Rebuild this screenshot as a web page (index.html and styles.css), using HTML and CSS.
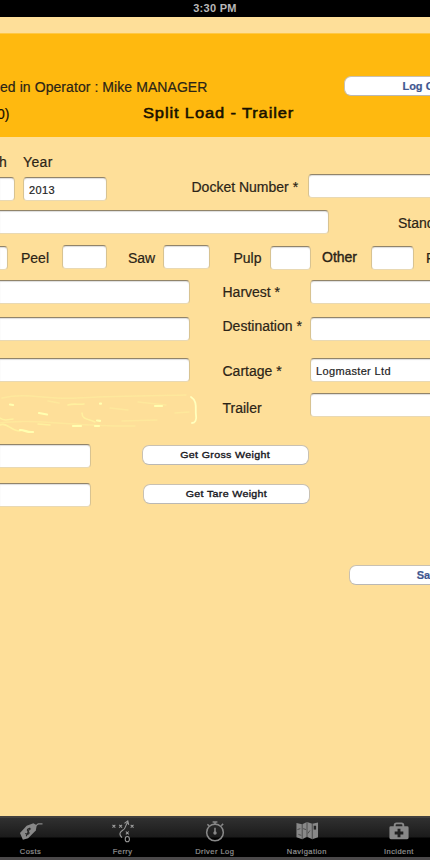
FILE: index.html
```html
<!DOCTYPE html>
<html lang="en">
<head>
<meta charset="utf-8">
<title>Split Load - Trailer</title>
<link rel="stylesheet" href="styles.css">
</head>
<body>
<div class="app">
  <div class="status">3:30 PM</div>
  <header class="header">
    <div class="operator-row">
      <span class="text operator">ed in Operator : Mike MANAGER</span>
      <button class="button logout"><span class="text">Log Out</span></button>
    </div>
    <div class="title-row">
      <span class="text count">0)</span>
      <h1 class="text title">Split Load - Trailer</h1>
    </div>
  </header>
  <main class="form">
    <div class="row date-row">
      <div class="date month"><label class="text">h</label><div class="field"></div></div>
      <div class="date year"><label class="text">Year</label><div class="field"><span class="text value">2013</span></div></div>
      <label class="text docket-label">Docket Number *</label>
      <div class="field docket"></div>
    </div>
    <div class="row stand-row">
      <div class="field open-left forest"></div>
      <label class="text stand-label">Stand *</label>
    </div>
    <div class="row grades">
      <div class="field open-left grade-first low"></div>
      <label class="text peel-label">Peel</label><div class="field peel"></div>
      <label class="text saw-label">Saw</label><div class="field saw"></div>
      <label class="text pulp-label">Pulp</label><div class="field pulp low"></div>
      <label class="text other-label">Other</label><div class="field other low"></div>
      <label class="text last-label">P</label>
    </div>
    <div class="row details">
      <div class="details-left">
        <div class="field open-left"></div>
        <div class="field open-left"></div>
        <div class="field open-left"></div>
        <svg class="residue" width="200" height="42" viewBox="0 0 200 42" fill="none" stroke="#fff3a0" stroke-linecap="round">
          <path stroke-width="1.500" opacity=".45" d="M2 7c25-6 45 2 75 0s65-2 109-3M0 32c30-5 80 4 135 3M48 10l11 2M138 11l28 3M175 22l14-1M110 17l18 2M122 30l35-1"/>
          <path stroke-width="1.600" opacity=".85" d="M68 14c6-2 10 0 16-1M82 22c0 7 7 6 13 9M0 27c5 4 9 1 13 1M38 33l12 1M0 34c8-3 10 6 20 6"/>
          <path stroke="#ffffb0" stroke-width="2.200" d="M10 13.500l3 .5M39 22l8 1.500M97 29.500l3 .3M100 12.700h1M155 15h7M73 35h8M95 35h4M20 39c5 0 8 3 13 2"/>
          <path stroke="#ffffbd" stroke-width="1.800" d="M191 6c7 4 4 13 5 18s-1 8-4 8"/>
        </svg>
      </div>
      <div class="details-labels">
        <label class="text">Harvest *</label>
        <label class="text">Destination *</label>
        <label class="text">Cartage *</label>
        <label class="text">Trailer</label>
      </div>
      <div class="details-right">
        <div class="field"></div>
        <div class="field"></div>
        <div class="field"><span class="text value">Logmaster Ltd</span></div>
        <div class="field"></div>
      </div>
    </div>
    <div class="row weight">
      <div class="field open-left"></div>
      <button class="button gross"><span class="text wide">Get Gross Weight</span></button>
    </div>
    <div class="row weight">
      <div class="field open-left"></div>
      <button class="button tare"><span class="text wide">Get Tare Weight</span></button>
    </div>
    <button class="button save"><span class="text">Save</span></button>
  </main>
  <nav class="tabs">
    <div class="tab">
      <svg width="28" height="24" viewBox="0 0 28 24"><path fill="#888" d="M2.500 13.500 9.500 6l7-2.500 3.500 2-1 5.500-8 8-5.500 1.500z"/><path fill="none" stroke="#888" stroke-width="1.200" d="M17 6c3 1 3-2 5-2h4"/><path fill="none" stroke="#252525" stroke-width="1.100" d="M14 9.500c-3-1.500-5 1-3 2.500s1 4-3 2M13 8l-4 9"/></svg>
      <span class="text">Costs</span>
    </div>
    <div class="tab">
      <svg width="28" height="24" viewBox="0 0 28 24" fill="none" stroke="#999" stroke-width="1.100"><path d="m3 5 3 3m0-3L3 8m7-3 3 3m0-3-3 3m12-3 3 3m0-3-3 3m-5 4 3 3m0-3-3 3M13 18.500c-4-4-2-6 1-8 3-1 2-5 5-8M15.500 3.500 19 1l1 4"/><ellipse cx="18.500" cy="20" rx="2.200" ry="2.700"/></svg>
      <span class="text">Ferry</span>
    </div>
    <div class="tab">
      <svg width="28" height="24" viewBox="0 0 28 24" fill="none" stroke="#888" stroke-width="1.600"><circle cx="14" cy="13" r="8.700"/><path d="M14 5V2m-2.500 0h5M14 8v6m6.500-8 2-2M6 4.500l2 1.500"/><circle cx="14" cy="13.500" r="1" fill="#888"/></svg>
      <span class="text">Driver Log</span>
    </div>
    <div class="tab">
      <svg width="28" height="24" viewBox="0 0 28 24"><path fill="#888" d="m3 3 6 1.500 5-2.500 5.500 2 6-1.500V18l-6 2-5.500-2.500-5 2.500-6-2z"/><path fill="none" stroke="#444" stroke-width=".9" d="M9 4v16m5-18v16m5.500-14v16M4 10l3-1m-2 6 3 1m2-7 3 1m2 4 2-3"/><path fill="#252525" d="M21 6h2.500v4H21z"/></svg>
      <span class="text">Navigation</span>
    </div>
    <div class="tab">
      <svg width="28" height="24" viewBox="0 0 28 24"><path fill="none" stroke="#888" stroke-width="2" d="M9.500 8V5.500q0-2 2-2h5q2 0 2 2V8"/><rect x="4" y="6.500" width="20" height="13.500" rx="1.500" fill="#888"/><path fill="#202020" d="M12.500 9h3v3h3v3h-3v3h-3v-3h-3v-3h3z"/></svg>
      <span class="text">Incident</span>
    </div>
  </nav>
</div>
</body>
</html>
```
FILE: styles.css
```css
* { box-sizing: border-box; }
body { margin: 0; font-family: "Liberation Sans", Arial, sans-serif; }
.app {
  width: 430px; height: 860px; overflow: hidden;
  display: flex; flex-direction: column;
  background: #fedf99; color: #2b2417;
}
.text { white-space: nowrap; font-size: 14px; line-height: 16px; flex: none; -webkit-text-stroke: .2px currentColor; }
.status {
  height: 16.500px; flex: none; background: #000; color: #b8b8b8;
  font-size: 11px; font-weight: bold; line-height: 16px; text-align: center; letter-spacing: .3px;
}
.header { height: 104px; flex: none; margin-top: 16px; padding-top: 42px; background: #ffb90f; border-top: 1px solid #ffc845; }
.operator-row, .title-row { display: flex; align-items: flex-start; }
.operator { width: 344px; margin-top: 3px; letter-spacing: .07px; }
.title-row { margin-top: 10px; color: #171000; }
.count { width: 146px; margin-left: -3px; }
.title { margin: -1px 0 0; font-weight: normal; letter-spacing: .75px; transform: scaleX(1.175); transform-origin: left; -webkit-text-stroke: .5px currentColor; }

.button {
  display: flex; align-items: center; justify-content: center; flex: none;
  height: 20px; padding: 0; background: #fff;
  border: 1px solid #c9c1b2; border-bottom: 1.500px solid #bab8b5; border-radius: 7px;
  color: #3f5790; font-family: inherit; font-weight: bold;
}
.button .text { font-size: 11px; line-height: 14px; }
.logout { width: 159px; }
.save { width: 161px; margin: 43px 0 0 349px; }
.button .wide { font-size: 9.500px; font-weight: normal; letter-spacing: .3px; color: #16161c; transform: scaleX(1.12); -webkit-text-stroke: .35px currentColor; }

.field {
  height: 24px; flex: none; background: #fff; border-radius: 4px;
  border: 1px solid #d8c391; border-top: 1.500px solid #91846a; border-bottom-color: #e9d9b3;
  box-shadow: inset 0 1px 1px #ddd;
}
.open-left { border-left: 0; border-top-left-radius: 0; border-bottom-left-radius: 0; }
.value { display: block; font-size: 11px; letter-spacing: .35px; line-height: 24px; padding-left: 5px; color: #222; }
.form { flex: 1; }
.row { display: flex; align-items: flex-start; }
.row > * { flex: none; }
.date-row { height: 73px; padding-top: 17px; }
.date .text:not(.value) { display: block; height: 23px; }
.month { width: 15px; margin-right: 8px; }
.month label { margin-left: -1px; }
.month .field { border-left: 0; border-radius: 0 4px 4px 0; }
.year { width: 84px; }
.year label { letter-spacing: .35px; }
.docket-label { width: 116px; margin: 25px 0 0 84.500px; }
.docket { width: 130px; margin-top: 20px; }
.stand-row { height: 35px; }
.forest { width: 329px; }
.stand-label { margin: 5px 0 0 69px; }
.grades { height: 35px; }
.low { margin-top: 1px; }
.grade-first { width: 8px; }
.peel-label { width: 41px; margin: 5px 0 0 13px; }
.peel { width: 45px; }
.saw-label { width: 35px; margin: 5px 0 0 21px; }
.saw { width: 47px; }
.pulp-label { width: 36px; margin: 5px 0 0 23.500px; }
.pulp { width: 41px; }
.other-label { width: 49px; margin: 4px 0 0 11.500px; -webkit-text-stroke-width: .4px; }
.other { width: 43px; }
.last-label { margin: 5px 0 0 12px; }
.details { height: 164px; }
.details-left, .details-labels, .details-right { display: flex; flex-direction: column; }
.details-left { width: 222.500px; }
.details-left .field { width: 190px; margin-bottom: 13px; }
.details-left .field:nth-child(2) { margin-bottom: 17px; }
.details-left .residue { margin-top: -4px; }
.details-labels { width: 87.500px; padding-top: 4px; gap: 18px; }
.details-labels .text:nth-child(2) { margin-bottom: 11px; }
.details-labels .text:nth-child(4) { margin-top: 3px; }
.details-right .field { width: 130px; margin-bottom: 13px; }
.details-right .field:nth-child(2) { margin-bottom: 17px; }
.details-right .field:nth-child(3) { margin-bottom: 11px; }
.weight { height: 39px; }
.weight .field { width: 91px; }
.gross { width: 167px; margin: 1px 0 0 51px; }
.tare { width: 167px; margin: 1px 0 0 52px; }

.tabs {
  display: flex; height: 44px; flex: none; margin-left: -15.500px; width: 462px;
  border-top: 2px solid #42403d; border-bottom: 3px solid #4b494a;
  background: linear-gradient(#303030, #1b1b1b 19px, #000 20px);
  color: #909090;
}
.tab { width: 92.100px; flex: none; display: flex; flex-direction: column; align-items: center; padding-top: 2px; }
.tab .text { font-size: 7.500px; line-height: 10px; margin-top: 4px; letter-spacing: .45px; -webkit-text-stroke: .2px currentColor; }
```
